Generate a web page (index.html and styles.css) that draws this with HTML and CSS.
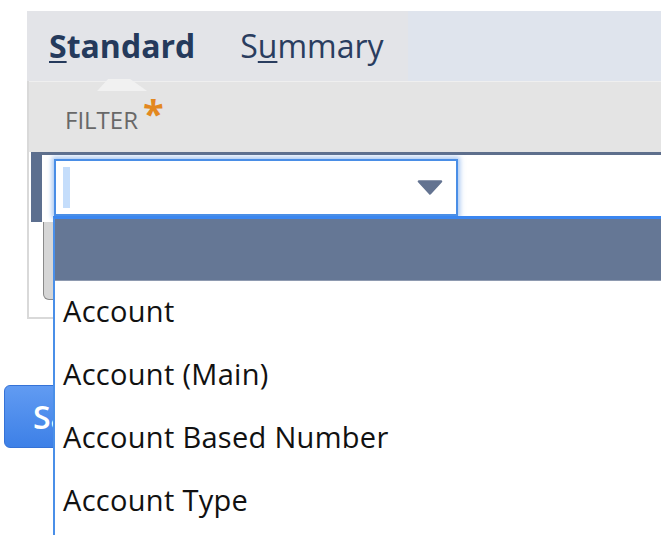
FILE: index.html
```html
<!DOCTYPE html>
<html lang="en">
<head>
<meta charset="utf-8">
<title>Saved Search Criteria</title>
<link rel="stylesheet" href="styles.css">
</head>
<body>
<div class="tabbar">
  <div class="tabs">
    <span class="tab active"><u>S</u>tandard</span>
    <span class="tab">S<u>u</u>mmary</span>
  </div>
  <div class="tabbar-rest"></div>
</div>
<div class="panel">
  <div class="panel-head">
    <span class="label">FILTER</span><span class="req">*</span>
  </div>
  <div class="machine">
    <div class="row">
      <div class="combo-wrap">
        <div class="combo">
          <span class="caret"></span>
          <svg class="arrow" width="26" height="15" viewBox="0 0 26 15"><path d="M2 1.5 H24 L13 13.5 Z" fill="#637391" stroke="#637391" stroke-width="2.5" stroke-linejoin="round"/></svg>
        </div>
        <ul class="dropdown">
          <li class="opt selected">&nbsp;</li>
          <li class="opt">Account</li>
          <li class="opt">Account (Main)</li>
          <li class="opt">Account Based Number</li>
          <li class="opt">Account Type</li>
        </ul>
      </div>
    </div>
    <div class="lower">
      <div class="gray-btn">Add</div>
    </div>
  </div>
</div>
<div class="btn-row">
  <button class="btn-primary">Save</button>
</div>
</body>
</html>
```

FILE: styles.css
```css
html {
  overflow: hidden;
  background: #ffffff;
}

body {
  margin: 0;
  padding: 0;
  height: 547px;
  font-family: "Open Sans", "Liberation Sans", sans-serif;
}

.tabbar {
  display: flex;
  margin: 11px 0 0 27px;
  height: 70px;
  background: #dfe4ed;
}

.tabs {
  width: 359px;
  background: #e3e4e8;
  display: flex;
  gap: 45px;
  padding: 13px 0 0 22px;
  align-items: flex-start;
}

.tab {
  position: relative;
  font-size: 32px;
  line-height: 44px;
  color: #2a3d5f;
  white-space: nowrap;
}

.tab u {
  text-decoration-thickness: 2px;
  text-underline-offset: 3px;
}

.tab.active {
  font-weight: 700;
  color: #253a5c;
}

.tab.active::after {
  content: "";
  position: absolute;
  left: 50%;
  top: 55px;
  width: 50px;
  height: 12px;
  margin-left: -25px;
  background: #f1f1f1;
  clip-path: polygon(0 100%, 22% 0, 66% 0, 100% 100%);
}

.tabbar-rest {
  flex: 1;
}

.panel {
  margin-left: 27px;
  border-left: 2px solid #d9d9d9;
  border-bottom: 2px solid #d9d9d9;
}

.panel-head {
  height: 71px;
  box-sizing: border-box;
  background: #e4e4e4;
  border-top: 1px solid #efefef;
  padding: 21px 0 0 36px;
  line-height: 32px;
}

.label {
  font-size: 24px;
  color: #686868;
}

.req {
  font-size: 38px;
  font-weight: 700;
  color: #e3881f;
  margin-left: 5px;
  line-height: 20px;
  vertical-align: 1px;
}

.machine {
  background: #ffffff;
  padding-left: 2px;
}

.row {
  height: 70px;
  box-sizing: border-box;
  border-top: 3px solid #5e6f8c;
  border-left: 11px solid #5c6f8f;
  padding: 4px 0 0 12px;
  background: #ffffff;
}

.combo-wrap {
  position: relative;
  width: 404px;
}

.combo {
  height: 57px;
  box-sizing: border-box;
  border: 2px solid #4a8ee6;
  box-shadow: 0 0 5px 2px rgba(90, 150, 230, 0.55);
  background: #ffffff;
  display: flex;
  align-items: center;
  justify-content: space-between;
}

.caret {
  width: 7px;
  height: 41px;
  margin-left: 7px;
  background: #c4ddfb;
}

.arrow {
  margin-right: 13px;
  display: block;
}

.dropdown {
  position: absolute;
  top: 57px;
  left: -1px;
  width: 700px;
  height: 319px;
  overflow: hidden;
  margin: 0;
  padding: 0;
  list-style: none;
  background: #ffffff;
  border-top: 3px solid #3a86f0;
  border-left: 2px solid #4a8fe8;
  box-sizing: border-box;
  z-index: 5;
}

.opt {
  height: 63px;
  line-height: 59px;
  padding-left: 8px;
  font-size: 29px;
  letter-spacing: 0.3px;
  color: #111111;
  white-space: nowrap;
}

.opt.selected {
  height: 62px;
  background: #657795;
  border-bottom: 1px solid #8e9ab0;
  box-sizing: border-box;
}

.lower {
  height: 95px;
  padding-left: 12px;
}

.gray-btn {
  width: 200px;
  height: 78px;
  box-sizing: border-box;
  border: 1px solid #8a8a8a;
  border-top: none;
  border-radius: 0 0 6px 6px;
  background: #d6d6d6;
  color: #333;
  font-size: 24px;
  line-height: 78px;
  padding-left: 20px;
}

.btn-row {
  margin: 66px 0 0 4px;
}

.btn-primary {
  height: 63px;
  width: 160px;
  border: 1px solid #3572d6;
  border-radius: 6px;
  background: linear-gradient(#619bf2, #3d80e7);
  color: #ffffff;
  font-family: "Open Sans", "Liberation Sans", sans-serif;
  font-size: 32px;
  font-weight: 600;
  text-align: left;
  padding: 0 0 0 28px;
}
```
